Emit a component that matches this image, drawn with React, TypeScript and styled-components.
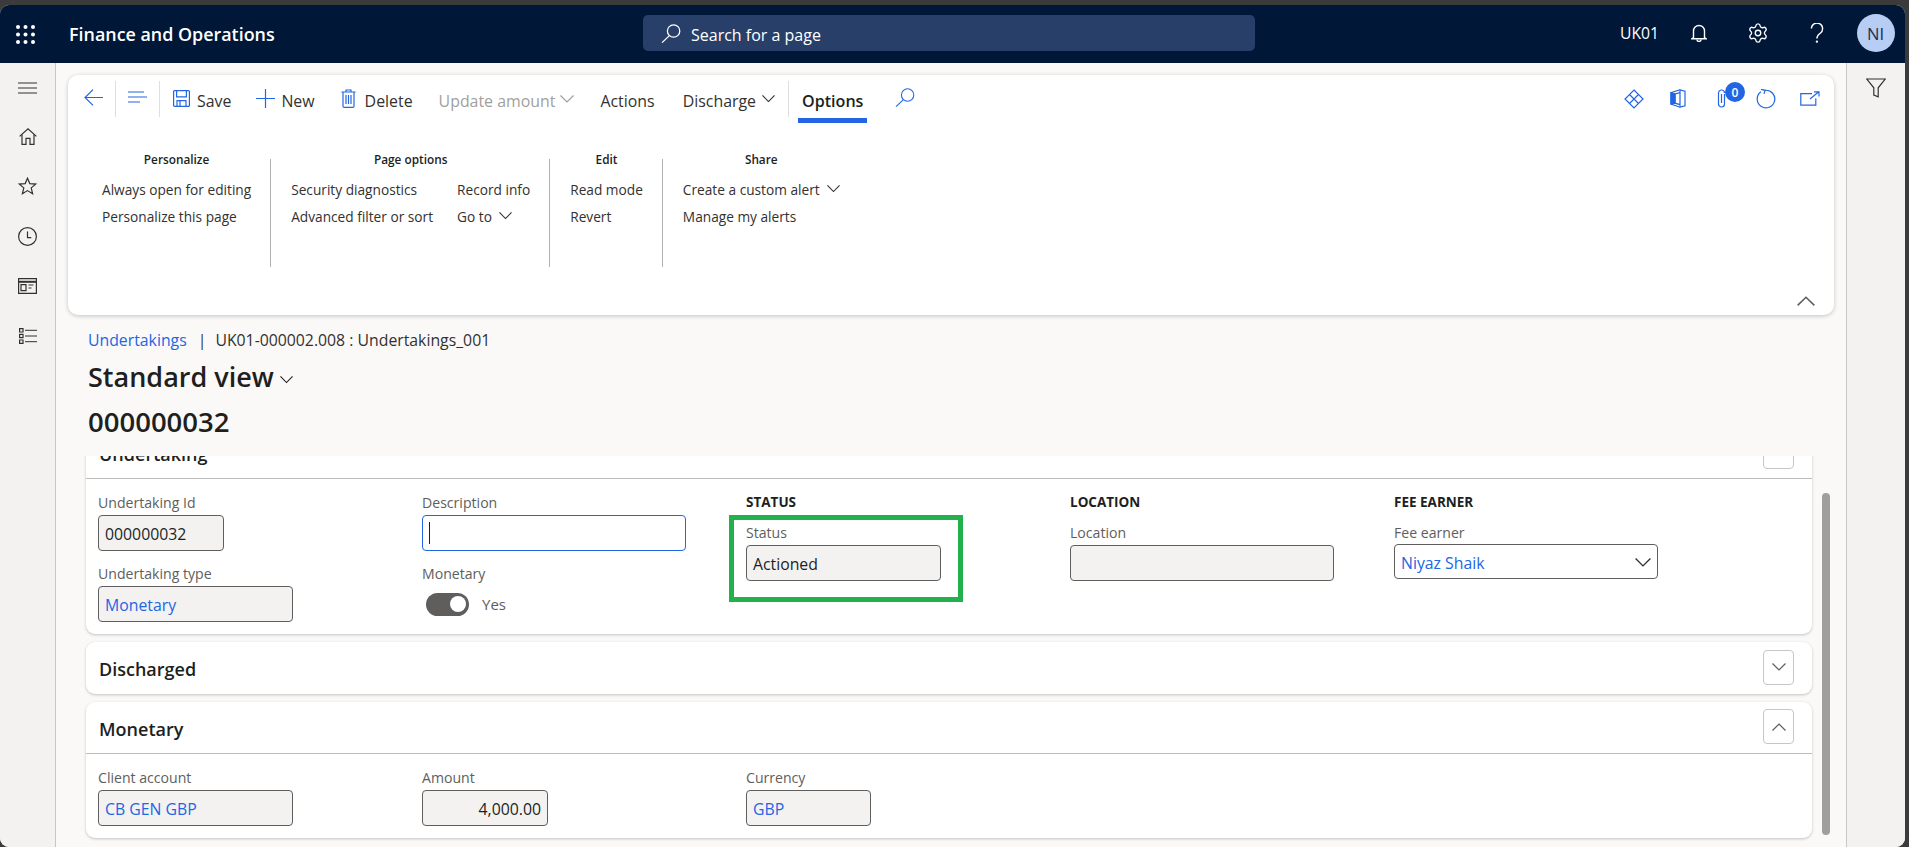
import styled, { createGlobalStyle } from 'styled-components'
import { Settings } from 'lucide-react'

const BLUE = '#2266e3'
const FONT = '"Open Sans", "Noto Sans", "Liberation Sans", sans-serif'

const GlobalStyle = createGlobalStyle`
  html, body {
    margin: 0;
    padding: 0;
    height: 100%;
    overflow: hidden;
    background: #3b3b3b;
    font-family: ${FONT};
  }
  #root { height: 100%; }
  * { box-sizing: border-box; }
`

const Frame = styled.div`
  width: 1905px;
  height: 842px;
  margin-top: 5px;
  display: flex;
  flex-direction: column;
  border-radius: 9px;
  overflow: hidden;
  background: #faf9f8;
`

/* top bar */
const TopBar = styled.header`
  height: 58px;
  flex-shrink: 0;
  display: flex;
  align-items: center;
  background: #001737;
  color: #fff;
`
const Brand = styled.div`
  width: 643px;
  display: flex;
  align-items: center;
  padding-left: 16px;
  gap: 34px;
  font-size: 17.9px;
  font-weight: 600;
  white-space: nowrap;
`
const SearchBox = styled.div`
  width: 612px;
  height: 36px;
  margin-top: -2px;
  display: flex;
  align-items: center;
  gap: 10px;
  padding-left: 18px;
  border-radius: 5px;
  background: #273f69;
  font-size: 16px;
`
const SearchLabel = styled.span`
  margin-top: 3px;
`
const TopRight = styled.div`
  margin-left: auto;
  display: flex;
  align-items: center;
`
const TopCell = styled.div`
  width: 59px;
  height: 40px;
  margin-top: -2px;
  display: flex;
  align-items: center;
  justify-content: center;
  font-size: 15.7px;
`
const Avatar = styled.div`
  width: 38px;
  height: 38px;
  border-radius: 50%;
  background: #b7cdf4;
  color: #1b2c4d;
  display: flex;
  align-items: center;
  justify-content: center;
  font-size: 16.5px;
`

/* page body */
const Main = styled.div`
  flex: 1;
  min-height: 0;
  display: flex;
`
const LeftRail = styled.nav`
  width: 56px;
  flex-shrink: 0;
  display: flex;
  flex-direction: column;
  align-items: center;
  gap: 30px;
  padding-top: 15px;
  background: #f3f2f1;
  border-right: 1px solid #c8c6c4;
  color: #323130;
`
const RailItem = styled.div<{ $pull?: boolean }>`
  width: 24px;
  height: 20px;
  display: flex;
  align-items: center;
  justify-content: center;
  margin-bottom: ${(p) => (p.$pull ? '-2px' : '0')};
`
const RightRail = styled.aside`
  width: 59px;
  flex-shrink: 0;
  display: flex;
  justify-content: center;
  padding-top: 15px;
  background: #f3f2f1;
  border-left: 1px solid #c8c6c4;
  color: #323130;
`
const Content = styled.main`
  flex: 1;
  min-width: 0;
  display: flex;
  flex-direction: column;
`

/* ribbon */
const Ribbon = styled.section`
  height: 240px;
  flex-shrink: 0;
  margin: 12px 12px 0;
  display: flex;
  flex-direction: column;
  border-radius: 10px;
  background: #fff;
  box-shadow: 0 1px 4px rgba(0, 0, 0, 0.22);
`
const Toolbar = styled.div`
  height: 48px;
  flex-shrink: 0;
  display: flex;
  align-items: flex-start;
  padding-left: 16px;
`
const ToolIcon = styled.div<{ $ml?: number }>`
  height: 48px;
  margin-left: ${(p) => p.$ml ?? 0}px;
  display: flex;
  align-items: center;
  padding-bottom: 4px;
  color: ${BLUE};
`
const ToolSep = styled.div<{ $before?: number; $after?: number }>`
  width: 1px;
  height: 36px;
  margin: 6px ${(p) => p.$after ?? 0}px 0 ${(p) => p.$before ?? 0}px;
  background: #e1dfdd;
`
const ToolButton = styled.div<{ $disabled?: boolean; $gap?: number; $ml?: number }>`
  height: 48px;
  margin-left: ${(p) => p.$ml ?? 0}px;
  padding: 4px 13px 0;
  display: flex;
  align-items: center;
  gap: ${(p) => p.$gap ?? 7}px;
  font-size: 15.9px;
  white-space: nowrap;
  color: ${(p) => (p.$disabled ? '#a19f9d' : '#323130')};
  svg { margin-top: -5px; }
`
const ToolGlyph = styled.span`
  display: flex;
  color: ${BLUE};
`
const ActiveTab = styled.div`
  height: 48px;
  margin-left: 9px;
  padding: 9px 4px 0;
  display: flex;
  align-items: center;
  font-size: 16.1px;
  font-weight: 600;
  color: #201f1e;
  border-bottom: 5px solid ${BLUE};
`
const ToolRight = styled.div`
  margin-left: auto;
  padding-right: 2px;
  display: flex;
  color: ${BLUE};
`
const ToolCell = styled.div`
  position: relative;
  width: 44px;
  height: 48px;
  padding-bottom: 1px;
  display: flex;
  align-items: center;
  justify-content: center;
`
const CountBadge = styled.span`
  position: absolute;
  top: 7px;
  left: 25px;
  width: 20px;
  height: 20px;
  border-radius: 50%;
  background: ${BLUE};
  color: #fff;
  font-size: 12px;
  font-weight: 600;
  display: flex;
  align-items: center;
  justify-content: center;
`
const Groups = styled.div`
  display: flex;
  align-items: flex-start;
  padding: 28px 0 0 14px;
`
const Group = styled.div`
  padding: 0 19px 0 20px;
  display: flex;
  flex-direction: column;
`
const GroupTitle = styled.div`
  height: 16px;
  line-height: 16px;
  text-align: center;
  font-size: 11.8px;
  font-weight: 600;
  color: #201f1e;
`
const GroupCols = styled.div`
  margin-top: 11px;
  display: flex;
  gap: 24px;
`
const GroupCol = styled.div`
  display: flex;
  flex-direction: column;
  gap: 5px;
`
const GroupLink = styled.div`
  height: 22px;
  display: flex;
  align-items: center;
  gap: 7px;
  font-size: 13.7px;
  white-space: nowrap;
  color: #323130;
`
const GroupSep = styled.div`
  width: 1px;
  height: 108px;
  margin-top: 8px;
  background: #b3b0ad;
`
const CollapseRow = styled.div`
  margin-top: auto;
  padding: 0 19px 9px 0;
  display: flex;
  justify-content: flex-end;
  color: #605e5c;
`

/* page title block */
const PageHead = styled.div`
  height: 141px;
  flex-shrink: 0;
  padding: 15px 0 0 32px;
`
const Crumbs = styled.div`
  height: 20px;
  display: flex;
  align-items: center;
  font-size: 15.8px;
  color: #323130;
  white-space: nowrap;
`
const CrumbLink = styled.span`
  color: ${BLUE};
`
const CrumbBar = styled.span`
  margin: 0 9px 0 11px;
`
const ViewTitle = styled.div`
  height: 36px;
  margin-top: 8px;
  display: flex;
  align-items: center;
  gap: 6px;
  font-size: 27px;
  font-weight: 600;
  color: #201f1e;
  svg { margin-top: 8px; }
`
const RecordId = styled.div`
  height: 34px;
  margin-top: 11px;
  line-height: 34px;
  font-size: 27.5px;
  font-weight: 600;
  color: #201f1e;
`

/* scrolled form */
const Scroller = styled.div`
  flex: 1;
  min-height: 0;
  position: relative;
  overflow: hidden;
`
const Cards = styled.div`
  width: 1756px;
  margin-top: -29px;
  padding-left: 30px;
  display: flex;
  flex-direction: column;
  gap: 8px;
`
const ScrollThumb = styled.div`
  position: absolute;
  top: 37px;
  right: 16px;
  width: 8px;
  height: 342px;
  border-radius: 4px;
  background: #a19f9d;
`
const Card = styled.section`
  border-radius: 9px;
  background: #fff;
  box-shadow: 0 1px 3px rgba(0, 0, 0, 0.22);
`
const CardHead = styled.div<{ $open?: boolean }>`
  height: 52px;
  padding: 0 18px 2px 13px;
  display: flex;
  align-items: center;
  justify-content: space-between;
  border-bottom: ${(p) => (p.$open ? '1px solid #bdbbb9' : 'none')};
`
const CardTitle = styled.h2`
  margin: 0;
  padding-top: 4px;
  font-size: 18px;
  font-weight: 600;
  color: #201f1e;
`
const ExpandButton = styled.div`
  width: 31px;
  height: 35px;
  display: flex;
  align-items: center;
  justify-content: center;
  border: 1px solid #c8c6c4;
  border-radius: 4px;
  color: #605e5c;
`
const CardBody = styled.div`
  padding: 15px 0 12px 12px;
  display: grid;
  grid-template-columns: repeat(5, 324px);
`
const Col = styled.div`
  display: flex;
  flex-direction: column;
  align-items: flex-start;
  gap: 14px;
`
const GroupHeading = styled.div`
  height: 18px;
  margin: -1px 0 -1px;
  line-height: 18px;
  font-size: 13.5px;
  font-weight: 700;
  color: #201f1e;
`
const Field = styled.div`
  position: relative;
  display: flex;
  flex-direction: column;
  align-items: flex-start;
`
const Label = styled.label`
  height: 18px;
  margin-bottom: 3px;
  line-height: 18px;
  font-size: 14.1px;
  color: #605e5c;
`
const Input = styled.div<{ $w: number; $link?: boolean; $right?: boolean }>`
  width: ${(p) => p.$w}px;
  height: 36px;
  padding: 2px 6px 0;
  display: flex;
  align-items: center;
  justify-content: ${(p) => (p.$right ? 'flex-end' : 'flex-start')};
  border: 1px solid #605e5c;
  border-radius: 4px;
  background: #f3f2f1;
  font-size: 15.8px;
  white-space: nowrap;
  color: ${(p) => (p.$link ? BLUE : '#201f1e')};
`
const FocusedInput = styled(Input)`
  padding-top: 0;
  background: #fff;
  border-color: ${BLUE};
`
const Caret = styled.span`
  width: 1px;
  height: 22px;
  background: #201f1e;
`
const SelectInput = styled(Input)`
  height: 35px;
  margin-top: -1px;
  justify-content: space-between;
  background: #fff;
`
const SelectChevron = styled.span`
  color: #323130;
`
const ToggleRow = styled.div`
  height: 36px;
  padding: 0 0 0 4px;
  display: flex;
  align-items: center;
  gap: 13px;
  font-size: 15px;
  color: #605e5c;
`
const ToggleTrack = styled.div`
  width: 43px;
  height: 23px;
  padding: 0 3px;
  display: flex;
  align-items: center;
  justify-content: flex-end;
  border-radius: 12px;
  background: #605e5c;
`
const ToggleKnob = styled.div`
  width: 16px;
  height: 16px;
  border-radius: 50%;
  background: #fff;
`
const Highlight = styled.div`
  position: absolute;
  top: -9px;
  left: -17px;
  width: 234px;
  height: 87px;
  border: 5px solid #22b14c;
  pointer-events: none;
`

const Glyph = styled.svg<{ $sw?: number }>`
  display: block;
  flex-shrink: 0;
  fill: none;
  stroke: currentColor;
  stroke-width: ${(p) => p.$sw ?? 1.2};
`
const Dots = styled.svg`
  display: block;
  flex-shrink: 0;
  fill: #fff;
`

const Chevron = ({ w = 14, up = false }: { w?: number; up?: boolean }) => (
  <Glyph width={w} height={w / 2 + 1} viewBox="0 0 14 8" preserveAspectRatio="none">
    <path d={up ? 'M0.5 7.5 7 1 13.5 7.5' : 'M0.5 0.5 7 7 13.5 0.5'} />
  </Glyph>
)

const Waffle = () => (
  <Dots width="19" height="19" viewBox="0 0 19 19">
    {[2, 9.5, 17].map((y) =>
      [2, 9.5, 17].map((x) => <circle key={`${x}-${y}`} cx={x} cy={y} r="2" />),
    )}
  </Dots>
)

const SearchIcon = ({ stroke = 1.3 }: { stroke?: number }) => (
  <Glyph width="20" height="19" viewBox="0 0 20 19" $sw={stroke}>
    <circle cx="12.6" cy="7" r="6.2" />
    <path d="M8.4 11.6 1 18.6" />
  </Glyph>
)

const App = () => {
  return (
    <>
      <GlobalStyle />
      <Frame>
        <TopBar>
          <Brand>
            <Waffle />
            <span>Finance and Operations</span>
          </Brand>
          <SearchBox>
            <SearchIcon />
            <SearchLabel>Search for a page</SearchLabel>
          </SearchBox>
          <TopRight>
            <TopCell>UK01</TopCell>
            <TopCell>
              <Glyph width="16" height="18" viewBox="0 0 16 18" $sw={1.4}>
                <path d="M2.5 13.6V7a5.5 5.5 0 0 1 11 0v6.6l1.6 1.2H.9z" />
                <path d="M6 15.4a2 2 0 0 0 4 0" />
              </Glyph>
            </TopCell>
            <TopCell>
              <Settings size={22} strokeWidth={1.5} />
            </TopCell>
            <TopCell>
              <Glyph width="14" height="20" viewBox="0 0 14 20" $sw={1.4}>
                <path d="M1.4 5.6a5.6 5.6 0 1 1 8.8 4.6C8 11.8 6.9 12.8 6.9 15.4" />
                <circle cx="6.9" cy="18.6" r=".5" />
              </Glyph>
            </TopCell>
            <TopCell>
              <Avatar>NI</Avatar>
            </TopCell>
          </TopRight>
        </TopBar>

        <Main>
          <LeftRail>
            <RailItem $pull>
              <Glyph width="19" height="12" viewBox="0 0 19 12">
                <path d="M0 1h19M0 6h19M0 11h19" />
              </Glyph>
            </RailItem>
            <RailItem>
              <Glyph width="18" height="17" viewBox="0 0 18 17">
                <path d="M.6 8.4 9 .8l8.4 7.6" />
                <path d="M3 6.6v9.8h4v-6h4v6h4V6.6" />
              </Glyph>
            </RailItem>
            <RailItem>
              <Glyph width="19" height="18" viewBox="0 0 19 18">
                <path d="M9.5 1.2l2.3 5.4 5.9.5-4.5 3.8 1.4 5.8-5.1-3.1-5.1 3.1 1.4-5.8-4.5-3.8 5.9-.5z" />
              </Glyph>
            </RailItem>
            <RailItem>
              <Glyph width="19" height="19" viewBox="0 0 19 19">
                <circle cx="9.5" cy="9.5" r="8.9" />
                <path d="M9.5 4.5v6.2h3.800" />
              </Glyph>
            </RailItem>
            <RailItem>
              <Glyph width="19" height="16" viewBox="0 0 19 16">
                <path d="M.6.6h17.800v14.800H.6z" />
                <path d="M.6 3.800h17.800" strokeWidth="2" />
                <path d="M3 6.600h5v6H3zM10.500 7h5M10.500 10h3" />
              </Glyph>
            </RailItem>
            <RailItem>
              <Glyph width="18" height="16" viewBox="0 0 18 16">
                <path d="M.6.6h3.400V4H.6zM.6 6.300h3.400v3.400H.6zM.6 12h3.400v3.400H.6z" />
                <path d="M6 2.300h12M6 8h12M6 13.700h12" strokeWidth="1" />
              </Glyph>
            </RailItem>
          </LeftRail>

          <Content>
            <Ribbon>
              <Toolbar>
                <ToolIcon>
                  <Glyph width="19" height="17" viewBox="0 0 19 17">
                    <path d="M19 8.500H1M9 .6 1 8.500l8 7.900" />
                  </Glyph>
                </ToolIcon>
                <ToolSep $before={12} $after={12} />
                <ToolIcon>
                  <Glyph width="19" height="12" viewBox="0 0 19 12">
                    <path d="M0 1h16M0 6h19M0 11h12" />
                  </Glyph>
                </ToolIcon>
                <ToolSep $before={12} />
                <ToolButton>
                  <ToolGlyph>
                    <Glyph width="17" height="17" viewBox="0 0 17 17">
                      <path d="M.6 1.600a1 1 0 0 1 1-1h13.800a1 1 0 0 1 1 1v13.800a1 1 0 0 1-1 1H1.600a1 1 0 0 1-1-1z" />
                      <path d="M3.600.8v6h9.800v-6M4 16.200v-5.600h9v5.600M7 11v5" />
                    </Glyph>
                  </ToolGlyph>
                  <span>Save</span>
                </ToolButton>
                <ToolButton $ml={-1} $gap={6}>
                  <ToolGlyph>
                    <Glyph width="19" height="19" viewBox="0 0 19 19">
                      <path d="M9.500 0v19M0 9.500h19" />
                    </Glyph>
                  </ToolGlyph>
                  <span>New</span>
                </ToolButton>
                <ToolButton $gap={9}>
                  <ToolGlyph>
                    <Glyph width="15" height="19" viewBox="0 0 15 19">
                      <path d="M.4 3h14.200M5 3V1h5v2" />
                      <path d="M2 3v14.200a1.200 1.200 0 0 0 1.200 1.200h8.600a1.200 1.200 0 0 0 1.200-1.200V3" />
                      <path d="M5 6v9M7.500 6v9M10 6v9" />
                    </Glyph>
                  </ToolGlyph>
                  <span>Delete</span>
                </ToolButton>
                <ToolButton $disabled $gap={5}>
                  <span>Update amount</span>
                  <Chevron w={14} />
                </ToolButton>
                <ToolButton>
                  <span>Actions</span>
                </ToolButton>
                <ToolButton $ml={2} $gap={6}>
                  <span>Discharge</span>
                  <Chevron w={13} />
                </ToolButton>
                <ToolSep />
                <ActiveTab>Options</ActiveTab>
                <ToolIcon $ml={28}>
                  <SearchIcon stroke={1.1} />
                </ToolIcon>
                <ToolRight>
                  <ToolCell>
                    <Glyph width="20" height="20" viewBox="0 0 20 20">
                      <path d="M10 1 19 10 10 19 1 10z" />
                      <path d="M5.500 5.500 14.500 14.500M14.500 5.500 5.500 14.500" />
                    </Glyph>
                  </ToolCell>
                  <ToolCell>
                    <Glyph width="16" height="19" viewBox="0 0 16 19">
                      <path d="M10 .8 1 3.600v11.400l9 3.200 5-1.400V2.200z" />
                      <path d="M10 .8v17.400M10 3.600 5 5v9.200l5 1.400" />
                      <path d="M1 3.600 5 5v9.200L1 15z" fill="currentColor" />
                    </Glyph>
                  </ToolCell>
                  <ToolCell>
                    <Glyph width="10" height="19" viewBox="0 0 10 19">
                      <path d="M7.500 5v10a3 3 0 0 1-6 0V4a3 3 0 0 1 6 0" />
                      <path d="M4.500 5v9" />
                    </Glyph>
                    <CountBadge>0</CountBadge>
                  </ToolCell>
                  <ToolCell>
                    <Glyph width="20" height="20" viewBox="0 0 20 20">
                      <path d="M9 1.300A8.800 8.800 0 1 1 5 2.800" />
                      <path d="M5 .3 9 1.300 8 4.800" />
                    </Glyph>
                  </ToolCell>
                  <ToolCell>
                    <Glyph width="20" height="15" viewBox="0 0 20 15">
                      <path d="M12 2.600H.8v11.600h15V7.500" />
                      <path d="M10 8l8.500-7M14 .8h5v4.600" />
                    </Glyph>
                  </ToolCell>
                </ToolRight>
              </Toolbar>

              <Groups>
                <Group>
                  <GroupTitle>Personalize</GroupTitle>
                  <GroupCols>
                    <GroupCol>
                      <GroupLink>Always open for editing</GroupLink>
                      <GroupLink>Personalize this page</GroupLink>
                    </GroupCol>
                  </GroupCols>
                </Group>
                <GroupSep />
                <Group>
                  <GroupTitle>Page options</GroupTitle>
                  <GroupCols>
                    <GroupCol>
                      <GroupLink>Security diagnostics</GroupLink>
                      <GroupLink>Advanced filter or sort</GroupLink>
                    </GroupCol>
                    <GroupCol>
                      <GroupLink>Record info</GroupLink>
                      <GroupLink>
                        Go to <Chevron w={13} />
                      </GroupLink>
                    </GroupCol>
                  </GroupCols>
                </Group>
                <GroupSep />
                <Group>
                  <GroupTitle>Edit</GroupTitle>
                  <GroupCols>
                    <GroupCol>
                      <GroupLink>Read mode</GroupLink>
                      <GroupLink>Revert</GroupLink>
                    </GroupCol>
                  </GroupCols>
                </Group>
                <GroupSep />
                <Group>
                  <GroupTitle>Share</GroupTitle>
                  <GroupCols>
                    <GroupCol>
                      <GroupLink>
                        Create a custom alert <Chevron w={13} />
                      </GroupLink>
                      <GroupLink>Manage my alerts</GroupLink>
                    </GroupCol>
                  </GroupCols>
                </Group>
              </Groups>

              <CollapseRow>
                <Chevron w={18} up />
              </CollapseRow>
            </Ribbon>

            <PageHead>
              <Crumbs>
                <CrumbLink>Undertakings</CrumbLink>
                <CrumbBar>|</CrumbBar>
                <span>UK01-000002.008 : Undertakings_001</span>
              </Crumbs>
              <ViewTitle>
                <span>Standard view</span>
                <Chevron w={13} />
              </ViewTitle>
              <RecordId>000000032</RecordId>
            </PageHead>

            <Scroller>
              <Cards>
                <Card>
                  <CardHead $open>
                    <CardTitle>Undertaking</CardTitle>
                    <ExpandButton>
                      <Chevron w={14} up />
                    </ExpandButton>
                  </CardHead>
                  <CardBody>
                    <Col>
                      <Field>
                        <Label>Undertaking Id</Label>
                        <Input $w={126}>000000032</Input>
                      </Field>
                      <Field>
                        <Label>Undertaking type</Label>
                        <Input $w={195} $link>Monetary</Input>
                      </Field>
                    </Col>
                    <Col>
                      <Field>
                        <Label>Description</Label>
                        <FocusedInput $w={264}>
                          <Caret />
                        </FocusedInput>
                      </Field>
                      <Field>
                        <Label>Monetary</Label>
                        <ToggleRow>
                          <ToggleTrack>
                            <ToggleKnob />
                          </ToggleTrack>
                          <span>Yes</span>
                        </ToggleRow>
                      </Field>
                    </Col>
                    <Col>
                      <GroupHeading>STATUS</GroupHeading>
                      <Field>
                        <Label>Status</Label>
                        <Input $w={195}>Actioned</Input>
                        <Highlight />
                      </Field>
                    </Col>
                    <Col>
                      <GroupHeading>LOCATION</GroupHeading>
                      <Field>
                        <Label>Location</Label>
                        <Input $w={264} />
                      </Field>
                    </Col>
                    <Col>
                      <GroupHeading>FEE EARNER</GroupHeading>
                      <Field>
                        <Label>Fee earner</Label>
                        <SelectInput $w={264} $link>
                          <span>Niyaz Shaik</span>
                          <SelectChevron>
                            <Chevron w={16} />
                          </SelectChevron>
                        </SelectInput>
                      </Field>
                    </Col>
                  </CardBody>
                </Card>

                <Card>
                  <CardHead>
                    <CardTitle>Discharged</CardTitle>
                    <ExpandButton>
                      <Chevron w={14} />
                    </ExpandButton>
                  </CardHead>
                </Card>

                <Card>
                  <CardHead $open>
                    <CardTitle>Monetary</CardTitle>
                    <ExpandButton>
                      <Chevron w={14} up />
                    </ExpandButton>
                  </CardHead>
                  <CardBody>
                    <Field>
                      <Label>Client account</Label>
                      <Input $w={195} $link>CB GEN GBP</Input>
                    </Field>
                    <Field>
                      <Label>Amount</Label>
                      <Input $w={126} $right>4,000.00</Input>
                    </Field>
                    <Field>
                      <Label>Currency</Label>
                      <Input $w={125} $link>GBP</Input>
                    </Field>
                  </CardBody>
                </Card>
              </Cards>
              <ScrollThumb />
            </Scroller>
          </Content>

          <RightRail>
            <Glyph width="20" height="20" viewBox="0 0 20 20">
              <path d="M.8 1h18.400l-7 8.800v9l-4.400-1.800V9.800z" />
            </Glyph>
          </RightRail>
        </Main>
      </Frame>
    </>
  )
}

export default App
